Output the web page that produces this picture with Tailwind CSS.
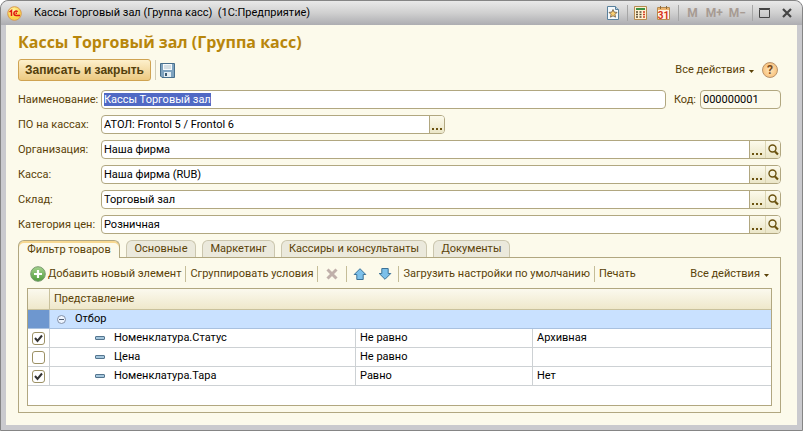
<!DOCTYPE html>
<html lang="ru">
<head>
    <meta charset="UTF-8">
    <meta name="viewport" content="width=device-width, initial-scale=1.0">
    <title>Кассы Торговый зал (Группа касс)</title>
    <script src="https://cdn.jsdelivr.net/npm/@tailwindcss/browser@4"></script>
</head>
<body class="bg-white font-['Roboto','Liberation_Sans',sans-serif] text-[11px] text-[#5a4208]">
    <svg class="hidden">
        <symbol id="search" viewBox="0 0 11 12">
            <circle cx="4.5" cy="4.5" r="3.5" fill="none" stroke="#6b5310" stroke-width="1.4"/>
            <path d="M7 7.5l3 3" stroke="#6b5310" stroke-width="2.2"/>
        </symbol>
        <symbol id="dots" viewBox="0 0 11 2">
            <path d="M0 0h2v2H0zM4 0h2v2H4zM8 0h2v2H8z" fill="#6b5310"/>
        </symbol>
        <symbol id="caret" viewBox="0 0 5 3">
            <path d="M0 0h5L2.500 3z" fill="#5a4208"/>
        </symbol>
        <symbol id="dash" viewBox="0 0 10 4">
            <rect x=".5" y=".5" width="9" height="3" rx=".5" fill="#a5c6dc" stroke="#54758f"/>
        </symbol>
        <symbol id="tick" viewBox="0 0 9 9">
            <path d="M1 4l2.500 3L8 1.500" fill="none" stroke="#333" stroke-width="2"/>
        </symbol>
    </svg>

    <div class="flex min-h-screen flex-col rounded-t-lg border border-[#858585] bg-[#cacace] px-[5px] pb-[5px]">
        <!-- Title bar -->
        <header class="-mx-[5px] flex h-6 items-center rounded-t-lg bg-linear-to-b from-[#e9e9e9] via-[#d0d0d0] to-[#adadb1] pr-2.5 pl-1.5 text-black">
            <svg class="mr-3 size-[15px]" viewBox="0 0 15 15">
                <defs>
                    <radialGradient id="logoFill" cx=".4" cy=".3"><stop offset="0" stop-color="#fffbb0"/><stop offset="1" stop-color="#fbd24a"/></radialGradient>
                </defs>
                <circle cx="7.500" cy="7.500" r="6.800" fill="url(#logoFill)" stroke="#d99a50"/>
                <path d="M2.500 6l2-1.500V10M10.500 6c-.8-1.500-3.600-1.200-3.600 1.300 0 1.600 1 2.200 2.200 2.200H13M10 7.300H8.500" fill="none" stroke="#e01810" stroke-width="1.500"/>
            </svg>
            <span class="flex-1 truncate whitespace-pre">Кассы Торговый зал (Группа касс)  (1С:Предприятие)</span>
            <div class="flex items-center text-xs font-bold text-[#a79b93]">
                <button aria-label="Избранное" class="mr-2">
                    <svg class="h-[14px] w-3" viewBox="0 0 12 14">
                        <path d="M.5.5h8l3 3v10H.5z" fill="#f4f9fc" stroke="#58809c"/>
                        <path d="M8.500.5v3h3" fill="#b9d2e2" stroke="#58809c"/>
                        <path d="M6 3.500l1.200 2.600 2.800.3-2 2 .5 2.800L6 9.800l-2.500 1.400.5-2.800-2-2 2.800-.3z" fill="#f9ce72" stroke="#6b5640" stroke-width=".8"/>
                    </svg>
                </button>
                <span class="mr-1.5 h-4 w-px bg-[#a6a6a6]"></span>
                <button aria-label="Калькулятор" class="mr-2.5">
                    <svg class="h-[14px] w-[13px]" viewBox="0 0 13 14">
                        <path d="M.5.5h12v13H.5z" fill="#fff0d2" stroke="#b58a50"/>
                        <path d="M2 2h9v2H2z" fill="#3d9142"/>
                        <path d="M2 6h2M2 8.500h2M2 11h2M5.500 6h2M5.500 8.500h2M5.500 11h2" stroke="#5a4a30" stroke-width="1.300"/>
                        <path d="M9 6h2M9 8.500h2M9 11h2" stroke="#d23b20" stroke-width="1.300"/>
                    </svg>
                </button>
                <button aria-label="Календарь" class="mr-2">
                    <svg class="h-[14px] w-[13px]" viewBox="0 0 13 14">
                        <path d="M.5 1.500h12v12H.5z" fill="#fff5e4" stroke="#b58a50"/>
                        <path d="M1 2h11v2H1z" fill="#eeb46c"/>
                        <path d="M3.500 0v3M9.500 0v3" stroke="#8c6a3c"/>
                        <text x="6.500" y="12.500" text-anchor="middle" font-size="10" font-weight="bold" font-family="Roboto" fill="#d8321c">31</text>
                    </svg>
                </button>
                <span class="mr-2 h-4 w-px bg-[#a6a6a6]"></span>
                <button class="mr-2">M</button>
                <button class="mr-1.5">M+</button>
                <button class="mr-1.5">M−</button>
                <span class="mr-1.5 h-4 w-px bg-[#a6a6a6]"></span>
                <button aria-label="Развернуть" class="mr-3">
                    <svg class="h-[10px] w-[11px]" viewBox="0 0 11 10"><path d="M.5 1.500h10v8H.5zM0 .5h11" fill="none" stroke="#444"/></svg>
                </button>
                <button aria-label="Закрыть">
                    <svg class="size-[10px]" viewBox="0 0 10 10"><path d="M1 1l8 8M9 1l-8 8" stroke="#444" stroke-width="2.200"/></svg>
                </button>
            </div>
        </header>

        <main class="flex flex-1 flex-col bg-[#fcfaeb] pt-[7px] pr-4 pb-3 pl-3">
            <h1 class="font-['Open_Sans',sans-serif] text-base leading-5 font-bold text-[#b8860b]">Кассы Торговый зал (Группа касс)</h1>

            <div class="mt-[7px] flex h-[22px] items-center">
                <button class="h-[22px] rounded-[3px] border border-[#cfa352] bg-linear-to-b from-[#fdf0cc] to-[#ecc980] px-1.5 font-['Liberation_Sans',sans-serif] text-xs font-bold text-[#54400c]">Записать и закрыть</button>
                <span class="mx-1 h-5 w-px bg-[#d3cdb4]"></span>
                <button aria-label="Записать">
                    <svg class="size-[15px]" viewBox="0 0 15 15">
                        <path d="M.5.5h14v14H2L.5 13z" fill="#7fa3bf" stroke="#486f8c"/>
                        <path d="M3 1h9v6H3z" fill="#f5f9fb"/>
                        <path d="M4 3h7M4 5h7" stroke="#b3c3cc"/>
                        <path d="M4 9h7v5H4z" fill="#e3edf3"/>
                        <path d="M5 10h2v3H5z" fill="#3a5a72"/>
                    </svg>
                </button>
                <button class="ml-auto flex items-center gap-1">Все действия <svg class="mt-0.5 h-[3px] w-[5px]"><use href="#caret"/></svg></button>
                <button aria-label="Справка" class="mr-[3px] ml-2 size-4 rounded-full border border-[#b9936b] bg-radial from-[#ffe7bd] to-[#f5b565] text-center text-xs leading-[14px] font-bold text-[#7a4a1c]">?</button>
            </div>

            <!-- Form fields -->
            <form class="mt-[9px] grid grid-cols-[83px_1fr] items-center gap-y-1.5 leading-[17px]">
                <label for="name">Наименование:</label>
                <div class="flex items-center">
                    <input id="name" value="Кассы Торговый зал" class="h-[19px] min-w-0 flex-1 rounded-sm border border-[#b1a780] bg-white px-0.5 text-black outline-none selection:bg-[#5069c4] selection:text-white">
                    <label for="code" class="mr-1 ml-2">Код:</label>
                    <input id="code" value="000000001" readonly class="h-[19px] w-[81px] rounded-sm border border-[#b1a780] px-0.5 text-black outline-none">
                </div>

                <label for="software">ПО на кассах:</label>
                <div class="flex h-[19px] w-[344px] overflow-hidden rounded-sm border border-[#b1a780] bg-white">
                    <input id="software" value="АТОЛ: Frontol 5 / Frontol 6" class="min-w-0 flex-1 px-0.5 text-black outline-none">
                    <button type="button" aria-label="Выбрать" class="flex w-[15px] items-end justify-center border-l border-[#b1a780] bg-linear-to-b from-[#fcfaeb] to-[#ebe6c8] pb-[3px]"><svg class="h-0.5 w-[11px]"><use href="#dots"/></svg></button>
                </div>

                <label for="organization">Организация:</label>
                <div class="flex h-[19px] overflow-hidden rounded-sm border border-[#b1a780] bg-white">
                    <input id="organization" value="Наша фирма" class="min-w-0 flex-1 px-0.5 text-black outline-none">
                    <button type="button" aria-label="Выбрать" class="flex w-4 items-end justify-center border-l border-[#b1a780] bg-linear-to-b from-[#fcfaeb] to-[#ebe6c8] pb-[3px]"><svg class="h-0.5 w-[11px]"><use href="#dots"/></svg></button>
                    <button type="button" aria-label="Открыть" class="flex w-[15px] items-center justify-center border-l border-[#dcd6b4] bg-linear-to-b from-[#fcfaeb] to-[#ebe6c8]"><svg class="h-3 w-[11px]"><use href="#search"/></svg></button>
                </div>

                <label for="cashbox">Касса:</label>
                <div class="flex h-[19px] overflow-hidden rounded-sm border border-[#b1a780] bg-white">
                    <input id="cashbox" value="Наша фирма (RUB)" class="min-w-0 flex-1 px-0.5 text-black outline-none">
                    <button type="button" aria-label="Выбрать" class="flex w-4 items-end justify-center border-l border-[#b1a780] bg-linear-to-b from-[#fcfaeb] to-[#ebe6c8] pb-[3px]"><svg class="h-0.5 w-[11px]"><use href="#dots"/></svg></button>
                    <button type="button" aria-label="Открыть" class="flex w-[15px] items-center justify-center border-l border-[#dcd6b4] bg-linear-to-b from-[#fcfaeb] to-[#ebe6c8]"><svg class="h-3 w-[11px]"><use href="#search"/></svg></button>
                </div>

                <label for="warehouse">Склад:</label>
                <div class="flex h-[19px] overflow-hidden rounded-sm border border-[#b1a780] bg-white">
                    <input id="warehouse" value="Торговый зал" class="min-w-0 flex-1 px-0.5 text-black outline-none">
                    <button type="button" aria-label="Выбрать" class="flex w-4 items-end justify-center border-l border-[#b1a780] bg-linear-to-b from-[#fcfaeb] to-[#ebe6c8] pb-[3px]"><svg class="h-0.5 w-[11px]"><use href="#dots"/></svg></button>
                    <button type="button" aria-label="Открыть" class="flex w-[15px] items-center justify-center border-l border-[#dcd6b4] bg-linear-to-b from-[#fcfaeb] to-[#ebe6c8]"><svg class="h-3 w-[11px]"><use href="#search"/></svg></button>
                </div>

                <label for="price" class="whitespace-nowrap">Категория цен:</label>
                <div class="flex h-[19px] overflow-hidden rounded-sm border border-[#b1a780] bg-white">
                    <input id="price" value="Розничная" class="min-w-0 flex-1 px-0.5 text-black outline-none">
                    <button type="button" aria-label="Выбрать" class="flex w-4 items-end justify-center border-l border-[#b1a780] bg-linear-to-b from-[#fcfaeb] to-[#ebe6c8] pb-[3px]"><svg class="h-0.5 w-[11px]"><use href="#dots"/></svg></button>
                    <button type="button" aria-label="Открыть" class="flex w-[15px] items-center justify-center border-l border-[#dcd6b4] bg-linear-to-b from-[#fcfaeb] to-[#ebe6c8]"><svg class="h-3 w-[11px]"><use href="#search"/></svg></button>
                </div>
            </form>

            <!-- Tabs -->
            <div role="tablist" class="mt-1.5 flex h-[17px] items-stretch gap-1.5 leading-4 whitespace-nowrap">
                <button role="tab" aria-selected="true" class="z-10 -mb-px w-[102px] rounded-t-md border border-b-0 border-[#b1a780] bg-[#fcfaeb] shadow-[inset_0_2px_#f7d891]">Фильтр товаров</button>
                <button role="tab" class="w-[70px] rounded-t-md border border-b-0 border-[#cbc6ae] bg-[#ebe9dc]">Основные</button>
                <button role="tab" class="w-[73px] rounded-t-md border border-b-0 border-[#cbc6ae] bg-[#ebe9dc]">Маркетинг</button>
                <button role="tab" class="w-[146px] rounded-t-md border border-b-0 border-[#cbc6ae] bg-[#ebe9dc]">Кассиры и консультанты</button>
                <button role="tab" class="w-[77px] rounded-t-md border border-b-0 border-[#cbc6ae] bg-[#ebe9dc]">Документы</button>
            </div>

            <section class="flex flex-1 flex-col border border-[#b1a780] px-2 pb-1.5">
                <div class="flex h-[30px] items-center pt-0.5 pl-[3px] whitespace-nowrap">
                    <button class="flex items-center gap-0.5">
                        <svg class="size-4" viewBox="0 0 16 16">
                            <defs>
                                <linearGradient id="addFill" x2="0" y2="1"><stop stop-color="#a5d38d"/><stop offset="1" stop-color="#4f9c3c"/></linearGradient>
                            </defs>
                            <circle cx="8" cy="8" r="7.300" fill="url(#addFill)" stroke="#7a9a70"/>
                            <path d="M8 4v8M4 8h8" stroke="#fff" stroke-width="2.200"/>
                        </svg>
                        Добавить новый элемент
                    </button>
                    <span class="mx-1 h-4 w-px bg-[#c5bd98]"></span>
                    <button>Сгруппировать условия</button>
                    <span class="mx-1 h-4 w-px bg-[#c5bd98]"></span>
                    <button aria-label="Удалить" class="mx-1">
                        <svg class="size-3" viewBox="0 0 12 12"><path d="M1.500 1.500l9 9M10.500 1.500l-9 9" stroke="#c0b0aa" stroke-width="3"/></svg>
                    </button>
                    <span class="mx-1 h-4 w-px bg-[#c5bd98]"></span>
                    <button aria-label="Вверх" class="mx-0.5">
                        <svg class="h-3 w-[14px]" viewBox="0 0 14 12"><path d="M7 .7l5.800 5.800h-2.600v5H3.800v-5H1.200z" fill="#7cc0ea" stroke="#3c7297"/></svg>
                    </button>
                    <button aria-label="Вниз" class="mr-0.5 ml-[9px]">
                        <svg class="h-3 w-[14px]" viewBox="0 0 14 12"><path d="M7 11.300l5.800-5.800h-2.600v-5H3.800v5H1.200z" fill="#7cc0ea" stroke="#3c7297"/></svg>
                    </button>
                    <span class="mx-1 h-4 w-px bg-[#c5bd98]"></span>
                    <button>Загрузить настройки по умолчанию</button>
                    <span class="mx-1 h-4 w-px bg-[#c5bd98]"></span>
                    <button>Печать</button>
                    <button class="mr-[3px] ml-auto flex items-center gap-1">Все действия <svg class="mt-0.5 h-[3px] w-[5px]"><use href="#caret"/></svg></button>
                </div>

                <div class="flex-1 border border-[#b1a780] bg-white">
                    <table class="w-full table-fixed border-separate border-spacing-0 text-left leading-[18px]">
                        <colgroup>
                            <col class="w-[22px]">
                            <col class="w-[306px]">
                            <col class="w-[177px]">
                            <col>
                        </colgroup>
                        <thead>
                            <tr class="h-[21px] bg-linear-to-b from-[#fbf9ee] to-[#eee7c9]">
                                <th class="border-r border-b border-[#c9c19c]"></th>
                                <th colspan="3" class="border-b border-[#c9c19c] pl-1 font-normal">Представление</th>
                            </tr>
                        </thead>
                        <tbody class="text-black">
                            <tr class="h-[19px] bg-[#c9e1ff]">
                                <td class="border-r border-b border-[#a9c1df] bg-[#6e97cf]"></td>
                                <td colspan="3" class="border-b border-[#a9c1df] pl-[7px]">
                                    <div class="flex items-center gap-[9px]">
                                        <svg class="size-[9px]" viewBox="0 0 9 9"><circle cx="4.500" cy="4.500" r="4" fill="#eef5ff" stroke="#8391a8"/><path d="M2 4.500h5" stroke="#4c5a70"/></svg>
                                        Отбор
                                    </div>
                                </td>
                            </tr>
                            <tr class="h-[19px]">
                                <td class="border-r border-b border-[#cdd1d4]">
                                    <div class="relative mx-auto size-[13px]">
                                        <input type="checkbox" checked aria-label="Номенклатура.Статус" class="peer block size-[13px] appearance-none rounded-[3px] border border-[#9c9165] bg-white">
                                        <svg class="pointer-events-none absolute top-0.5 left-0.5 hidden size-[9px] peer-checked:block"><use href="#tick"/></svg>
                                    </div>
                                </td>
                                <td class="border-r border-b border-[#cdd1d4] pl-[45px]"><div class="flex items-center gap-[9px]"><svg class="h-1 w-[10px]"><use href="#dash"/></svg>Номенклатура.Статус</div></td>
                                <td class="border-r border-b border-[#cdd1d4] pl-1">Не равно</td>
                                <td class="border-b border-[#cdd1d4] pl-1">Архивная</td>
                            </tr>
                            <tr class="h-[19px]">
                                <td class="border-r border-b border-[#cdd1d4]">
                                    <div class="relative mx-auto size-[13px]">
                                        <input type="checkbox" aria-label="Цена" class="peer block size-[13px] appearance-none rounded-[3px] border border-[#9c9165] bg-white">
                                        <svg class="pointer-events-none absolute top-0.5 left-0.5 hidden size-[9px] peer-checked:block"><use href="#tick"/></svg>
                                    </div>
                                </td>
                                <td class="border-r border-b border-[#cdd1d4] pl-[45px]"><div class="flex items-center gap-[9px]"><svg class="h-1 w-[10px]"><use href="#dash"/></svg>Цена</div></td>
                                <td class="border-r border-b border-[#cdd1d4] pl-1">Не равно</td>
                                <td class="border-b border-[#cdd1d4] pl-1"></td>
                            </tr>
                            <tr class="h-[19px]">
                                <td class="border-r border-b border-[#cdd1d4]">
                                    <div class="relative mx-auto size-[13px]">
                                        <input type="checkbox" checked aria-label="Номенклатура.Тара" class="peer block size-[13px] appearance-none rounded-[3px] border border-[#9c9165] bg-white">
                                        <svg class="pointer-events-none absolute top-0.5 left-0.5 hidden size-[9px] peer-checked:block"><use href="#tick"/></svg>
                                    </div>
                                </td>
                                <td class="border-r border-b border-[#cdd1d4] pl-[45px]"><div class="flex items-center gap-[9px]"><svg class="h-1 w-[10px]"><use href="#dash"/></svg>Номенклатура.Тара</div></td>
                                <td class="border-r border-b border-[#cdd1d4] pl-1">Равно</td>
                                <td class="border-b border-[#cdd1d4] pl-1">Нет</td>
                            </tr>
                        </tbody>
                    </table>
                </div>
            </section>
        </main>
    </div>

    <script>
        const nameInput = document.getElementById("name");
        nameInput.focus();
        nameInput.select();
    </script>
</body>
</html>
